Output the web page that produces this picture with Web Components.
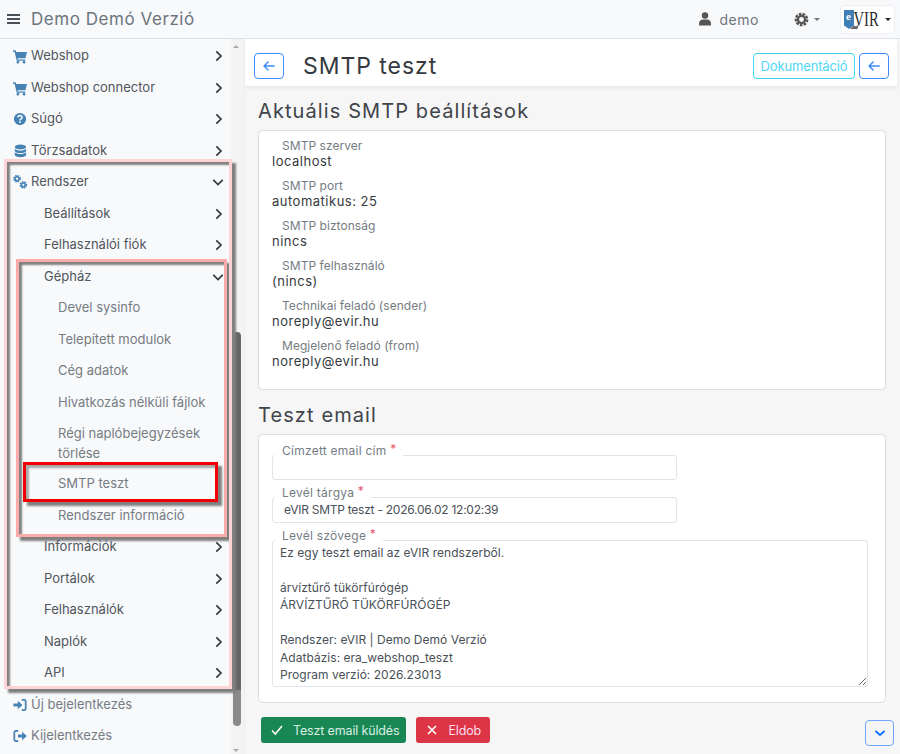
<!DOCTYPE html>
<html lang="hu">
<head>
<meta charset="utf-8">
<title>SMTP teszt</title>
<style>
html, body { margin: 0; height: 100%; overflow: hidden; }
body {
	font-family: "Inter", "Liberation Sans", sans-serif;
	font-size: 13px;
	color: #495057;
	background: #f5f5f5;
	display: grid;
	grid-template-columns: 245px 1fr;
	grid-template-rows: 39px 1fr;
	height: 754px;
}
top-bar { grid-column: 1 / 3; }
</style>
</head>
<body>
<top-bar></top-bar>
<side-nav>
	<nav-row icon="cart" arrow="right">Webshop</nav-row>
	<nav-row icon="cart" arrow="right">Webshop connector</nav-row>
	<nav-row icon="help" arrow="right">Súgó</nav-row>
	<nav-row icon="db" arrow="right">Törzsadatok</nav-row>
	<mark-box tone="outer">
		<nav-row icon="cogs" arrow="down">Rendszer</nav-row>
		<nav-row level="1" arrow="right">Beállítások</nav-row>
		<nav-row level="1" arrow="right">Felhasználói fiók</nav-row>
		<mark-box tone="inner">
			<nav-row level="1" arrow="down">Gépház</nav-row>
			<nav-row level="2">Devel sysinfo</nav-row>
			<nav-row level="2">Telepített modulok</nav-row>
			<nav-row level="2">Cég adatok</nav-row>
			<nav-row level="2">Hivatkozás nélküli fájlok</nav-row>
			<nav-row level="2" tall>Régi naplóbejegyzések törlése</nav-row>
			<mark-box tone="red"><nav-row level="2">SMTP teszt</nav-row></mark-box>
			<nav-row level="2">Rendszer információ</nav-row>
		</mark-box>
		<nav-row level="1" arrow="right">Információk</nav-row>
		<nav-row level="1" arrow="right">Portálok</nav-row>
		<nav-row level="1" arrow="right">Felhasználók</nav-row>
		<nav-row level="1" arrow="right">Naplók</nav-row>
		<nav-row level="1" arrow="right">API</nav-row>
	</mark-box>
	<nav-row icon="login" muted>Új bejelentkezés</nav-row>
	<nav-row icon="logout" muted>Kijelentkezés</nav-row>
</side-nav>
<main-pane>
	<page-head></page-head>
	<section-title>Aktuális SMTP beállítások</section-title>
	<info-card>
		<info-field label="SMTP szerver">localhost</info-field>
		<info-field label="SMTP port">automatikus: 25</info-field>
		<info-field label="SMTP biztonság">nincs</info-field>
		<info-field label="SMTP felhasználó">(nincs)</info-field>
		<info-field label="Technikai feladó (sender)">noreply@evir.hu</info-field>
		<info-field label="Megjelenő feladó (from)">noreply@evir.hu</info-field>
	</info-card>
	<section-title>Teszt email</section-title>
	<mail-form></mail-form>
	<form-actions></form-actions>
</main-pane>
<script>
const ICONS = {
	cart: '<path fill="currentColor" d="M0 1.500h3l.6 2H16l-1.800 7H5.200l.4 1.500H14V13.500H4.300L1.800 3H0z"/><circle fill="currentColor" cx="5.600" cy="15" r="1.500"/><circle fill="currentColor" cx="12.600" cy="15" r="1.500"/>',
	help: '<circle fill="currentColor" cx="8" cy="8" r="7"/><path fill="none" stroke="#fff" stroke-width="1.700" d="M5.700 6.300c0-2.900 4.700-2.900 4.700-.1 0 1.700-2.400 1.700-2.400 3.400"/><rect fill="#fff" x="7.100" y="10.700" width="1.800" height="1.800"/>',
	db: '<ellipse fill="currentColor" cx="8.500" cy="3.400" rx="6.500" ry="2.700"/><path fill="currentColor" d="M2 5.300v2.600c0 1.400 2.900 2.500 6.500 2.500S15 9.300 15 7.900V5.300c-1.200 1.300-3.700 2-6.500 2S3.200 6.600 2 5.300z"/><path fill="currentColor" d="M2 9.500v3.100c0 1.400 2.900 2.500 6.500 2.500s6.500-1.100 6.500-2.500V9.500c-1.200 1.300-3.700 2-6.500 2S3.200 10.800 2 9.500z"/>',
	cogs: '<circle fill="none" stroke="currentColor" stroke-width="1.800" stroke-dasharray="1.800 1" cx="4.600" cy="4.200" r="3.500"/><circle fill="none" stroke="currentColor" stroke-width="1.700" cx="4.600" cy="4.200" r="2.200"/><circle fill="none" stroke="currentColor" stroke-width="1.800" stroke-dasharray="1.800 1" cx="11.800" cy="11.300" r="3.400"/><circle fill="none" stroke="currentColor" stroke-width="1.700" cx="11.800" cy="11.300" r="2.100"/>',
	login: '<path fill="currentColor" d="M.5 6.300h5V3.200L10.800 8l-5.300 4.800V9.700h-5z"/><path fill="none" stroke="currentColor" stroke-width="2" d="M10 2.200h3a1.500 1.500 0 0 1 1.500 1.500v8.600a1.500 1.500 0 0 1-1.500 1.500h-3"/>',
	logout: '<path fill="currentColor" d="M5.700 6.300h4.800V3.200L15.800 8l-5.300 4.800V9.700H5.700z"/><path fill="none" stroke="currentColor" stroke-width="2" d="M6 2.200H3a1.500 1.500 0 0 0-1.500 1.500v8.600A1.500 1.500 0 0 0 3 13.800h3"/>'
};
const ARROW_LEFT = '<svg width="14" height="14" viewBox="0 0 16 16"><path fill="none" stroke="currentColor" stroke-width="1.600" stroke-linecap="round" stroke-linejoin="round" d="M14 8H2.500M7 3.300 2.300 8 7 12.700"/></svg>';

class TopBar extends HTMLElement {
	constructor() {
		super();
		this.attachShadow({mode: 'open'}).innerHTML = `
	<style>
	:host {
		display: flex;
		align-items: center;
		box-sizing: border-box;
		height: 39px;
		padding: 0 5px 0 7px;
		background: #f8f9fb;
		border-bottom: 1px solid #dee2e6;
		color: #6c757d;
	}
	.menu { width: 13px; height: 10px; margin-right: 11px; color: #495057; }
	.brand { font-size: 17px; letter-spacing: .55px; flex: 1; color: #6c757d; }
	.user { display: flex; align-items: center; gap: 8px; font-size: 14px; letter-spacing: .55px; color: #6c757d; margin-right: 35px; }
	.gear { display: flex; align-items: center; gap: 5px; margin-right: 20px; }
	.caret { width: 0; height: 0; border: 3px solid transparent; border-top-color: currentColor; border-bottom: 0; }
	.logo {
		display: flex; align-items: center; gap: 3px;
		box-sizing: border-box;
		width: 55px; height: 29px; padding: 0 3px 0 3px;
		background: #fff; border: 1px solid #edeff2; border-radius: 5px;
		color: #212529;
	}
	.logo svg { overflow: visible; }
	.logo text { font-family: "Liberation Serif", serif; }
	</style>
	<svg class="menu" viewBox="0 0 13 10"><path fill="none" stroke="currentColor" stroke-width="1.800" d="M0 1h13M0 5h13M0 9h13"/></svg>
	<span class="brand">Demo Demó Verzió</span>
	<span class="user">
		<svg width="12" height="14" viewBox="0 0 12 14"><circle fill="#555" cx="6" cy="3.500" r="3.200"/><path fill="#555" d="M0 13.500v-1.800C0 9 2 7.600 4 7.600h4c2 0 4 1.400 4 4.100v1.800z"/></svg>
		demo
	</span>
	<span class="gear">
		<svg width="15" height="15" viewBox="0 0 16 16"><circle fill="none" stroke="#555" stroke-width="2.600" stroke-dasharray="2.800 1.300" cx="8" cy="8" r="6"/><circle fill="none" stroke="#555" stroke-width="2.400" cx="8" cy="8" r="3.800"/></svg>
		<i class="caret"></i>
	</span>
	<span class="logo">
		<svg width="38" height="27" viewBox="0 0 38 27">
			<path fill="#3f7fb5" d="M0 4h10v15.500L5 23 0 19.500z"/>
			<text x="2" y="14" font-size="11" font-weight="700" fill="#fff">e</text>
			<path fill="#666" d="M6 23l4-3.500 2 1 2.500-2-1 4.500z"/>
			<text transform="translate(9.500 20) scale(.7 1)" font-size="21" fill="#2b2b2b">VIR</text>
		</svg>
		<i class="caret"></i>
	</span>
	`;
	}
}

class SideNav extends HTMLElement {
	constructor() {
		super();
		this.attachShadow({mode: 'open'}).innerHTML = `
	<style>
	:host {
		display: block;
		position: relative;
		background: #f8f9fb;
		overflow: hidden;
		border-right: 1px solid #ebedf0;
		box-sizing: border-box;
	}
	.rows { position: relative; z-index: 1; width: 231px; padding-top: 1px; }
	.track { position: absolute; top: 0; right: 0; bottom: 0; width: 13px; background: #f4f4f5; }
	.thumb {
		position: absolute; top: 293px; left: 2px; right: 3px; height: 394px;
		background: linear-gradient(#666 0 358px, #8a8a8a 358px);
		border-radius: 4px;
	}
	.up, .down { position: absolute; left: 2px; width: 0; height: 0; border: 3.500px solid transparent; }
	.up { top: 6px; border-bottom-color: #aaa; border-top: 0; }
	.down { bottom: 2px; border-top-color: #aaa; border-bottom: 0; }
	</style>
	<div class="rows"><slot></slot></div>
	<div class="track"><i class="up"></i><i class="thumb"></i><i class="down"></i></div>
	`;
	}
}

class NavRow extends HTMLElement {
	constructor() {
		super();
		var icon = this.getAttribute('icon');
		var arrow = this.getAttribute('arrow');
		var arrowPath = arrow === 'down' ? 'M1.500 4.500 7 10l5.500-5.500' : 'M5 1.500 10.500 7 5 12.500';
		this.attachShadow({mode: 'open'}).innerHTML = `
	<style>
	:host {
		display: flex;
		align-items: flex-start;
		position: relative;
		box-sizing: border-box;
		padding: 6px 7px 6px 13px;
		line-height: 19.500px;
		color: #50565c;
	}
	:host([level="1"]) { padding-left: 44px; }
	:host([level="2"]) { padding-left: 58px; color: #757c83; }
	:host([tall]) { padding-bottom: 5px; padding-right: 24px; }
	:host([muted]) { color: #757c83; }
	.icon { width: 14px; height: 14px; margin: 3px 4px 0 0; color: #4682b4; flex: none; overflow: visible; }
	.label { flex: 1; }
	.arrow { width: 12px; height: 12px; margin: 4px 0 0 6px; color: #343a40; flex: none; }
	</style>
	${icon ? `<svg class="icon" viewBox="0 0 16 16">${ICONS[icon]}</svg>` : ''}
	<span class="label"><slot></slot></span>
	${arrow ? `<svg class="arrow" viewBox="0 0 14 14"><path fill="none" stroke="currentColor" stroke-width="2" d="${arrowPath}"/></svg>` : ''}
	`;
	}
}

// annotation frames drawn over the menu groups
class MarkBox extends HTMLElement {
	constructor() {
		super();
		this.attachShadow({mode: 'open'}).innerHTML = `
	<style>
	:host { display: block; position: relative; }
	.frame { position: absolute; pointer-events: none; box-sizing: border-box; }
	:host([tone="outer"]) .frame {
		inset: -7px 0 0 4px; width: 228px;
		border: 3px solid #fdd3d3;
		box-shadow: 4px 4px 2px #808080, inset 3px 3px 2px #808080;
	}
	:host([tone="inner"]) .frame {
		inset: -1.500px 4px -6px 16px;
		border: 3px solid #fdaaaa;
		box-shadow: 4px 4px 2px #808080, inset 3px 3px 2px #808080;
	}
	:host([tone="red"]) .frame {
		inset: -6px 13px -2px 23px;
		border: 3px solid #f00000;
		box-shadow: 4px 4px 2px #808080, inset 3px 3px 2px #a8a8a8;
	}
	</style>
	<slot></slot>
	<div class="frame"></div>
	`;
	}
}

class MainPane extends HTMLElement {
	constructor() {
		super();
		this.attachShadow({mode: 'open'}).innerHTML = `
	<style>
	:host { display: block; overflow: hidden; padding-right: 3px; background: #f6f6f6; }
	</style>
	<slot></slot>
	`;
	}
}

class PageHead extends HTMLElement {
	constructor() {
		super();
		this.attachShadow({mode: 'open'}).innerHTML = `
	<style>
	:host {
		display: flex;
		align-items: center;
		box-sizing: border-box;
		height: 47px;
		padding: 7px 8px 0 9px;
		background: #fff;
		box-shadow: 0 2px 4px rgba(0,0,0,.07);
	}
	h1 { flex: 1; margin: 0 0 0 19px; font-size: 23px; font-weight: 400; letter-spacing: .95px; color: #343a40; }
	.btn {
		display: flex; align-items: center; justify-content: center;
		box-sizing: border-box; height: 26px;
		border: 1px solid #0d6efd; border-radius: 4px; color: #0d6efd;
	}
	.back { width: 30px; opacity: .8; }
	.doc { width: 102px; margin-right: 4px; border-color: #3dd5f3; color: #4fd8f4; letter-spacing: -.15px; }
	</style>
	<span class="btn back">${ARROW_LEFT}</span>
	<h1>SMTP teszt</h1>
	<span class="btn doc">Dokumentáció</span>
	<span class="btn back">${ARROW_LEFT}</span>
	`;
	}
}

class SectionTitle extends HTMLElement {
	constructor() {
		super();
		this.attachShadow({mode: 'open'}).innerHTML = `
	<style>
	:host {
		display: block;
		margin: 13px 0 7px 13px;
		font-size: 20px;
		line-height: 24px;
		letter-spacing: 1.100px;
		color: #3f444a;
	}
	</style>
	<slot></slot>
	`;
	}
}

class InfoCard extends HTMLElement {
	constructor() {
		super();
		this.attachShadow({mode: 'open'}).innerHTML = `
	<style>
	:host {
		display: block;
		box-sizing: border-box;
		height: 260px;
		margin: 0 11px 0 13px;
		padding: 7px 13px;
		background: #fff;
		border: 1px solid #dcdcdc;
		border-radius: 5px;
	}
	</style>
	<slot></slot>
	`;
	}
}

class InfoField extends HTMLElement {
	constructor() {
		super();
		this.attachShadow({mode: 'open'}).innerHTML = `
	<style>
	:host { display: block; height: 40px; letter-spacing: .5px; color: #343a40; line-height: 14.500px; }
	.label { display: block; padding-left: 10px; font-size: 12px; color: #757c83; letter-spacing: .05px; line-height: 15.500px; }
	</style>
	<span class="label">${this.getAttribute('label')}</span>
	<slot></slot>
	`;
	}
}

class MailField extends HTMLElement {
	constructor() {
		super();
		var label = this.getAttribute('label');
		this.attachShadow({mode: 'open'}).innerHTML = `
	<style>
	:host { display: block; position: relative; padding-top: 14px; }
	.label {
		position: absolute; top: 1px; left: 3px;
		padding: 0 7px;
		background: #fff;
		font-size: 12px; line-height: 17px; letter-spacing: .25px;
		color: #757c83;
	}
	.label b { position: relative; top: -2px; color: #e4566a; font-weight: 400; }
	.box {
		box-sizing: border-box;
		border: 1px solid #e2e5e8;
		border-radius: 3px;
		background: #fff;
	}
	</style>
	<div class="box"><slot></slot></div>
	<span class="label">${label} <b>*</b></span>
	`;
	}
}

class MailForm extends HTMLElement {
	constructor() {
		super();
		this.attachShadow({mode: 'open'}).innerHTML = `
	<style>
	:host {
		display: block;
		box-sizing: border-box;
		height: 269px;
		margin: 1px 11px 0 13px;
		padding: 5.500px 17px 0 13px;
		background: #fff;
		border: 1px solid #dcdcdc;
		border-radius: 5px;
	}
	.short { width: 405px; margin-bottom: 3px; }
	.single { height: 23.500px; padding: 0 11px; font-size: 12px; line-height: 23.500px; letter-spacing: -.25px; color: #495057; }
	textarea {
		display: block;
		box-sizing: border-box;
		width: 100%;
		height: 145px;
		padding: 3px 7px;
		border: 0;
		outline: 0;
		resize: vertical;
		background: transparent;
		font: inherit;
		font-size: 12px;
		line-height: 17.500px;
		letter-spacing: .03px;
		color: #495057;
	}
	</style>
	<mail-field class="short" label="Címzett email cím"><div class="single"></div></mail-field>
	<mail-field class="short" label="Levél tárgya"><div class="single">eVIR SMTP teszt - 2026.06.02 12:02:39</div></mail-field>
	<mail-field label="Levél szövege"><textarea spellcheck="false">Ez egy teszt email az eVIR rendszerből.

árvíztűrő tükörfúrógép
ÁRVÍZTŰRŐ TÜKÖRFÚRÓGÉP

Rendszer: eVIR | Demo Demó Verzió
Adatbázis: era_webshop_teszt
Program verzió: 2026.23013</textarea></mail-field>
	`;
	}
}

class FormActions extends HTMLElement {
	constructor() {
		super();
		this.attachShadow({mode: 'open'}).innerHTML = `
	<style>
	:host { display: flex; align-items: flex-start; gap: 10px; margin: 14px 3px 0 16px; }
	.btn {
		display: flex; align-items: center; gap: 10px;
		box-sizing: border-box; height: 26px;
		padding: 0 7px 0 10px;
		border-radius: 3px;
		color: #fff;
		font-size: 12.500px;
		letter-spacing: -.15px;
	}
	.ok { background: #198754; color: #d8efe4; }
	.no { background: #dc3545; color: #fde; padding-right: 9px; }
	.more {
		display: flex; align-items: center; justify-content: center;
		box-sizing: border-box; width: 29px; height: 26px; margin: 3px 0 0 auto;
		border: 1.500px solid #6ea8fe; border-radius: 4px; color: #0d6efd;
	}
	</style>
	<span class="btn ok"><svg width="12" height="12" viewBox="0 0 12 12"><path fill="none" stroke="#fff" stroke-width="1.500" d="M1 6.500 4.300 10 11 2"/></svg>Teszt email küldés</span>
	<span class="btn no"><svg width="12" height="12" viewBox="0 0 12 12"><path fill="none" stroke="#fff" stroke-width="1.700" d="M2 2l8 8M10 2l-8 8"/></svg>Eldob</span>
	<span class="more"><svg width="12" height="12" viewBox="0 0 12 12"><path fill="none" stroke="currentColor" stroke-width="1.800" d="M1.500 4 6 8l4.500-4"/></svg></span>
	`;
	}
}

customElements.define('top-bar', TopBar);
customElements.define('side-nav', SideNav);
customElements.define('nav-row', NavRow);
customElements.define('mark-box', MarkBox);
customElements.define('main-pane', MainPane);
customElements.define('page-head', PageHead);
customElements.define('section-title', SectionTitle);
customElements.define('info-card', InfoCard);
customElements.define('info-field', InfoField);
customElements.define('mail-field', MailField);
customElements.define('mail-form', MailForm);
customElements.define('form-actions', FormActions);
</script>
</body>
</html>
